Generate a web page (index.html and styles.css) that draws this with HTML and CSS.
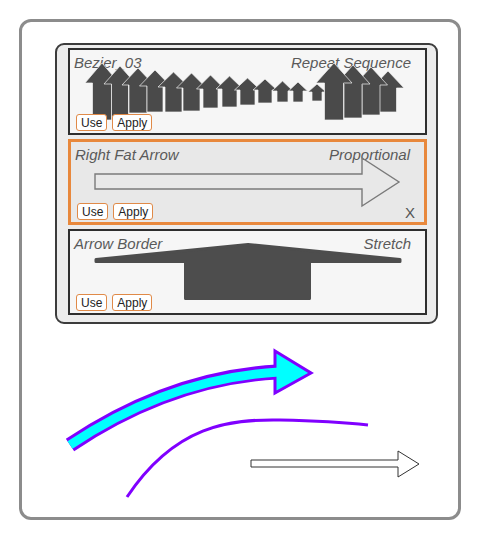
FILE: index.html
```html
<!DOCTYPE html>
<html>
<head>
<meta charset="utf-8">
<link rel="stylesheet" href="styles.css">
</head>
<body>
<div class="frame">
  <div class="panel">
    <div class="row">
      <div class="head"><span>Bezier_03</span><span>Repeat Sequence</span></div>
      <svg class="preview" width="355" height="83" viewBox="70 50 355 83">
        <g class="arrows">
          <path d="M102,63 L119,83 L111.5,83 L111.5,120 L92.5,120 L92.5,83 L85,83 Z"/>
          <path d="M120,66 L136,84 L128.5,84 L128.5,117 L111.5,117 L111.5,84 L104,84 Z"/>
          <path d="M138,68 L154,85 L147,85 L147,113 L129,113 L129,85 L122,85 Z"/>
          <path d="M155,70 L170.5,86 L163,86 L163,112 L147,112 L147,86 L139.5,86 Z"/>
          <path d="M173.5,72 L189,87 L182,87 L182,112 L165,112 L165,87 L158,87 Z"/>
          <path d="M191.5,73 L206.5,88 L200,88 L200,111 L183,111 L183,88 L176.5,88 Z"/>
          <path d="M210.5,75 L224.5,89 L218,89 L218,108 L203,108 L203,89 L196.5,89 Z"/>
          <path d="M229.5,76 L243,89 L237,89 L237,107 L222,107 L222,89 L216,89 Z"/>
          <path d="M247.5,78 L260.5,90 L255,90 L255,105 L240,105 L240,90 L234.5,90 Z"/>
          <path d="M265,79 L277,90 L272,90 L272,103 L258,103 L258,90 L253,90 Z"/>
          <path d="M282.5,81 L293,91 L288,91 L288,102 L277,102 L277,91 L272,91 Z"/>
          <path d="M298,82 L307.5,91 L303,91 L303,102 L293,102 L293,91 L288.5,91 Z"/>
          <path d="M317,84 L326,92 L322,92 L322,101 L312,101 L312,92 L308,92 Z"/>
          <path d="M388,71 L404,88 L396.5,88 L396.5,112 L379.5,112 L379.5,88 L372,88 Z"/>
          <path d="M371,67 L387.5,85 L380,85 L380,115 L362,115 L362,85 L354.5,85 Z"/>
          <path d="M353,65 L370,84 L362,84 L362,118 L344,118 L344,84 L336,84 Z"/>
          <path d="M334,63 L352,83 L343.5,83 L343.5,120 L324.5,120 L324.5,83 L316,83 Z"/>
        </g>
      </svg>
      <div class="foot"><button class="btn">Use</button><button class="btn">Apply</button></div>
    </div>
    <div class="row selected">
      <div class="head"><span>Right Fat Arrow</span><span>Proportional</span></div>
      <svg class="preview" width="353" height="80" viewBox="71 142 353 80">
        <path class="outline" d="M95,174 L362,174 L362,158 L399,182 L362,206 L362,189 L95,189 Z"/>
      </svg>
      <div class="foot"><button class="btn">Use</button><button class="btn">Apply</button><span class="close">X</span></div>
    </div>
    <div class="row">
      <div class="head"><span>Arrow Border</span><span>Stretch</span></div>
      <svg class="preview" width="355" height="82" viewBox="70 231 355 82">
        <path class="solid" d="M96,259.5 L248,244.5 L400,259.5 L400,261.5 L309.5,261.5 L309.5,298.5 L185.5,298.5 L185.5,261.5 L96,261.5 Z"/>
      </svg>
      <div class="foot"><button class="btn">Use</button><button class="btn">Apply</button></div>
    </div>
  </div>
  <svg class="canvas" width="436" height="193" viewBox="22 324 436 193">
    <path class="band-outer" d="M70,445 Q170,378 277,372"/>
    <path class="head-fat" d="M275,351 L311,373 L275,393 Z"/>
    <path class="band-inner" d="M70,445 Q170,378 279,372"/>
    <path class="curve" d="M127,497 C175,425 230,419 280,420 S350,423 368,425"/>
    <path class="thin-arrow" d="M251,460 L398,460 L398,451 L419,464 L398,477 L398,467 L251,467 Z"/>
  </svg>
</div>
</body>
</html>
```
FILE: styles.css
```css
html, body {
  margin: 0;
  padding: 0;
  background: #ffffff;
}
body {
  padding: 19px;
  font-family: "Liberation Sans", Arial, sans-serif;
}
.frame {
  box-sizing: border-box;
  width: 442px;
  height: 501px;
  border: 3px solid #8c8c8c;
  border-radius: 12px;
  background: #ffffff;
}
.panel {
  box-sizing: border-box;
  width: 383px;
  height: 281px;
  margin: 21px 0 0 33px;
  border: 2px solid #3c3c3c;
  border-radius: 9px;
  background: #ececec;
  padding: 3px 9px 0 11px;
  display: flex;
  flex-direction: column;
  gap: 4px;
}
.row {
  position: relative;
  box-sizing: border-box;
  height: 86px;
  border: 2px solid #2e2e2e;
  background: #f6f6f6;
  display: flex;
  flex-direction: column;
}
.row:first-child {
  height: 87px;
}
.row.selected {
  border: 3px solid #e8883c;
  background: #e8e8e8;
}
.head {
  display: flex;
  justify-content: space-between;
  padding: 4px 14px 0 4px;
  font-style: italic;
  font-size: 15px;
  line-height: 17px;
  color: #5a5a5a;
}
.preview {
  position: absolute;
  left: 0;
  top: 0;
  overflow: visible;
  z-index: 1;
}
.arrows path {
  fill: #4a4a4a;
  stroke: #f3f3f3;
  stroke-width: 0.7;
  stroke-linejoin: round;
}
.outline {
  fill: none;
  stroke: #7a7a7a;
  stroke-width: 1.4;
}
.solid {
  fill: #4d4d4d;
  stroke: #4d4d4d;
  stroke-width: 3;
  stroke-linejoin: round;
}
.foot {
  position: relative;
  z-index: 2;
  margin-top: auto;
  display: flex;
  align-items: flex-end;
  gap: 5px;
  padding: 0 9px 2px 6px;
}
.btn {
  box-sizing: border-box;
  height: 17px;
  margin: 0;
  padding: 0 4px;
  border: 1.5px solid #e08a48;
  border-radius: 3px;
  background: #ffffff;
  font-family: "Liberation Sans", Arial, sans-serif;
  font-size: 12px;
  line-height: 14px;
  color: #222222;
}
.close {
  margin-left: auto;
  font-size: 15px;
  line-height: 14px;
  color: #555555;
}
.canvas {
  display: block;
}
.band-outer {
  fill: none;
  stroke: #8000ff;
  stroke-width: 15;
}
.band-inner {
  fill: none;
  stroke: #00ffff;
  stroke-width: 9;
}
.head-fat {
  fill: #00ffff;
  stroke: #8000ff;
  stroke-width: 3;
  stroke-linejoin: miter;
}
.curve {
  fill: none;
  stroke: #8000ff;
  stroke-width: 3;
}
.thin-arrow {
  fill: #ffffff;
  stroke: #333333;
  stroke-width: 1;
}
```
